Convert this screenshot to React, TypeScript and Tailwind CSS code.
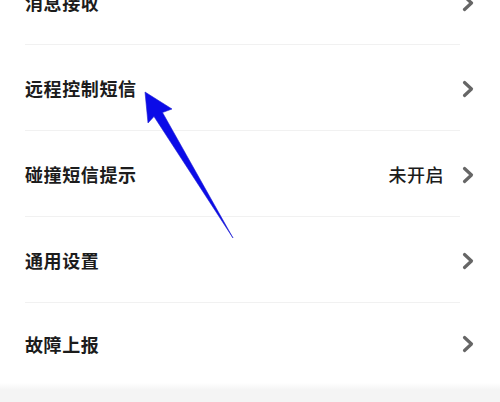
import React from "react";

const rows: { label: string; value?: string }[] = [
  { label: "消息接收" },
  { label: "远程控制短信" },
  { label: "碰撞短信提示", value: "未开启" },
  { label: "通用设置" },
  { label: "故障上报" },
];

function Chevron() {
  return (
    <svg width="12" height="18" viewBox="0 0 12 18" className="shrink-0">
      <path d="M2.5 2.5 L9.5 9 L2.5 15.5" fill="none" stroke="#666666" strokeWidth="3.2" strokeLinecap="round" strokeLinejoin="round" />
    </svg>
  );
}

export default function App() {
  return (
    <div
      className="relative w-[500px] h-[402px] overflow-hidden bg-white"
      style={{ fontFamily: '"Noto Sans CJK SC", "Noto Sans", sans-serif' }}
    >
      <div className="-mt-[41px] flex flex-col">
        {rows.map((r, i) => (
          <div key={r.label} className="flex flex-col">
            <div className={`flex items-center pl-[25px] pr-[26px] pt-[2px] ${i === rows.length - 1 ? "h-[80px]" : "h-[85px]"}`}>
              <span className="text-[18px] font-semibold text-[#1c1c1c] tracking-[0.6px]">{r.label}</span>
              <div className="flex-1" />
              {r.value && (
                <span className="mr-[18px] text-[18px] font-medium text-[#1c1c1c] tracking-[0.5px]">{r.value}</span>
              )}
              <Chevron />
            </div>
            {i < rows.length - 1 && <div className="ml-[25px] mr-[40px] h-px bg-[#f1f1f1]" />}
          </div>
        ))}
        <div className="h-[7px] bg-gradient-to-b from-white to-[#f4f4f4]" />
        <div className="h-[40px] bg-[#f4f4f4]" />
      </div>
      <svg className="absolute left-0 top-0 pointer-events-none" width="500" height="402">
        <polygon
          points="145,92 172,109 162.5,112.5 233,238 154,116.5 148,123"
          fill="#0b0be8"
          stroke="#2020d0"
          strokeWidth="0.6"
          strokeLinejoin="round"
        />
      </svg>
    </div>
  );
}
